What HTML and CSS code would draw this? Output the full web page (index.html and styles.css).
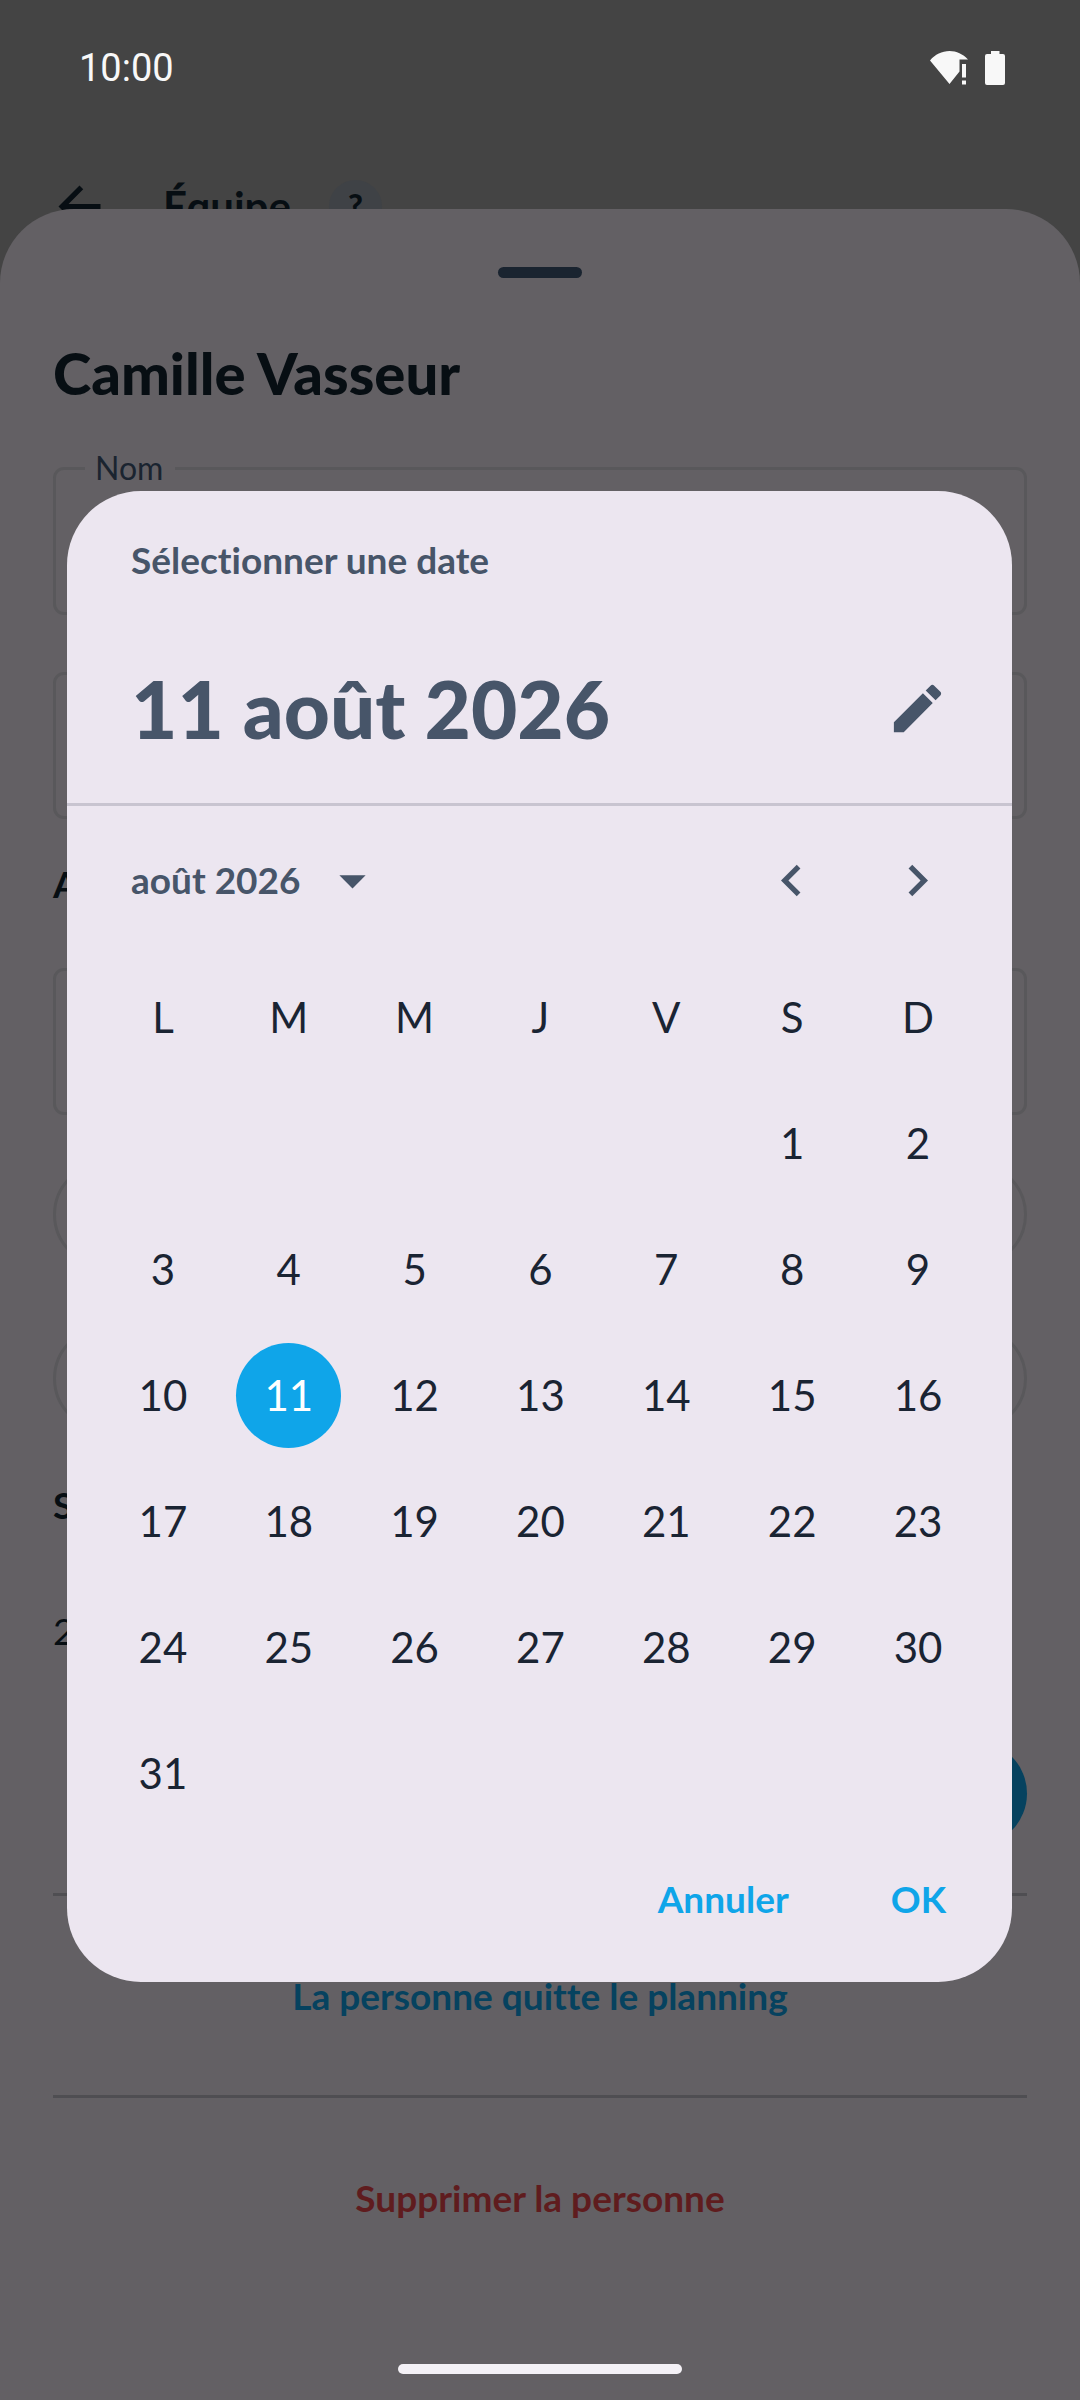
FILE: index.html
```html
<!DOCTYPE html>
<html lang="fr">

<head>
    <meta charset="UTF-8">
    <meta name="viewport" content="width=device-width, initial-scale=1.0">
    <title>Équipe</title>
    <link rel="stylesheet" href="styles.css">
</head>

<body>
    <div class="screen">
        <div class="status-bar">
            <span class="clock">10:00</span>
            <div class="status-icons">
                <svg width="38" height="34" viewBox="0 0 38 34" fill="#f8f8f8">
                    <path d="M0 9.500C5 3.500 12 0 19.500 0C26.500 0 33 3 38 8.500H29.500V20.500L19.500 33Z" />
                    <path d="M32 13H36V26.500H32ZM32 29.500H36V33.500H32Z" />
                </svg>
                <svg width="20" height="34" viewBox="0 0 20 34" fill="#f8f8f8">
                    <path d="M6 0H14.500V3H18Q20 3 20 5V32Q20 34 18 34H2Q0 34 0 32V5Q0 3 2 3H6Z" />
                </svg>
            </div>
        </div>

        <header class="app-bar">
            <button class="icon-btn" aria-label="Retour">
                <svg width="63" height="63" viewBox="0 0 24 24">
                    <path d="M20 11H7.830l5.590-5.590L12 4l-8 8 8 8 1.410-1.410L7.830 13H20v-2z" />
                </svg>
            </button>
            <h1>Équipe</h1>
            <button class="help">?</button>
        </header>

        <main class="sheet">
            <div class="handle"></div>
            <h2 class="name">Camille Vasseur</h2>

            <fieldset class="field named">
                <legend><label for="nom">Nom</label></legend>
                <input type="text" id="nom">
            </fieldset>
            <div class="field">
                <input type="text" aria-label="Poste">
            </div>

            <h3 class="section first">A</h3>
            <div class="field">
                <input type="text" aria-label="Date">
            </div>
            <button class="pill" aria-label="Début"></button>
            <button class="pill" aria-label="Fin"></button>

            <h3 class="section">S</h3>
            <p class="count">2</p>
            <button class="pill save" aria-label="Enregistrer"></button>

            <hr>
            <button class="text-btn leave">La personne quitte le planning</button>
            <hr>
            <button class="text-btn remove">Supprimer la personne</button>

            <div class="home-bar"></div>
        </main>
    </div>

    <div class="overlay">
        <div class="dialog" role="dialog" aria-labelledby="dialog-title">
            <div class="dialog-head">
                <p class="dialog-title" id="dialog-title">Sélectionner une date</p>
                <div class="headline">
                    <h2>11 août 2026</h2>
                    <button class="icon-btn" aria-label="Modifier">
                        <svg width="63" height="63" viewBox="0 0 24 24">
                            <path d="M3 17.250V21h3.750L17.810 9.940l-3.750-3.750L3 17.250zM20.710 7.040c.39-.39.39-1.020 0-1.410l-2.340-2.340c-.39-.39-1.020-.39-1.410 0l-1.830 1.830 3.750 3.750 1.830-1.830z" />
                        </svg>
                    </button>
                </div>
            </div>

            <div class="month-bar">
                <button class="month">août 2026
                    <svg width="63" height="63" viewBox="0 0 24 24">
                        <path d="M7 10l5 5 5-5z" />
                    </svg>
                </button>
                <div class="arrows">
                    <button class="icon-btn" aria-label="Mois précédent">
                        <svg width="63" height="63" viewBox="0 0 24 24">
                            <path d="M15.410 16.590L10.830 12l4.580-4.590L14 6l-6 6 6 6 1.410-1.410z" />
                        </svg>
                    </button>
                    <button class="icon-btn" aria-label="Mois suivant">
                        <svg width="63" height="63" viewBox="0 0 24 24">
                            <path d="M8.590 16.590L13.170 12 8.590 7.410 10 6l6 6-6 6-1.410-1.410z" />
                        </svg>
                    </button>
                </div>
            </div>

            <table class="calendar">
                <thead>
                    <tr>
                        <th>L</th>
                        <th>M</th>
                        <th>M</th>
                        <th>J</th>
                        <th>V</th>
                        <th>S</th>
                        <th>D</th>
                    </tr>
                </thead>
                <tbody>
                    <tr>
                        <td></td>
                        <td></td>
                        <td></td>
                        <td></td>
                        <td></td>
                        <td><button>1</button></td>
                        <td><button>2</button></td>
                    </tr>
                    <tr>
                        <td><button>3</button></td>
                        <td><button>4</button></td>
                        <td><button>5</button></td>
                        <td><button>6</button></td>
                        <td><button>7</button></td>
                        <td><button>8</button></td>
                        <td><button>9</button></td>
                    </tr>
                    <tr>
                        <td><button>10</button></td>
                        <td><button class="selected">11</button></td>
                        <td><button>12</button></td>
                        <td><button>13</button></td>
                        <td><button>14</button></td>
                        <td><button>15</button></td>
                        <td><button>16</button></td>
                    </tr>
                    <tr>
                        <td><button>17</button></td>
                        <td><button>18</button></td>
                        <td><button>19</button></td>
                        <td><button>20</button></td>
                        <td><button>21</button></td>
                        <td><button>22</button></td>
                        <td><button>23</button></td>
                    </tr>
                    <tr>
                        <td><button>24</button></td>
                        <td><button>25</button></td>
                        <td><button>26</button></td>
                        <td><button>27</button></td>
                        <td><button>28</button></td>
                        <td><button>29</button></td>
                        <td><button>30</button></td>
                    </tr>
                    <tr>
                        <td><button>31</button></td>
                        <td></td>
                        <td></td>
                        <td></td>
                        <td></td>
                        <td></td>
                        <td></td>
                    </tr>
                </tbody>
            </table>

            <div class="actions">
                <button>Annuler</button>
                <button>OK</button>
            </div>
        </div>
    </div>
</body>

</html>
```

FILE: styles.css
```css
* {
    box-sizing: border-box;
}

body {
    margin: 0;
    font-family: Lato, "Open Sans", sans-serif;
    font-size: 37px;
    line-height: 48px;
    font-variant-ligatures: none;
    color: #070e13;
    background-color: #444444;
}

h1,
h2,
h3,
p {
    margin: 0;
}

button {
    padding: 0;
    border: none;
    background: none;
    font: inherit;
    font-variant-ligatures: none;
    color: inherit;
    cursor: pointer;
}

svg {
    display: block;
}

.screen {
    display: flex;
    flex-direction: column;
    min-height: 100vh;
}

/* status bar and app bar */
.status-bar {
    display: flex;
    justify-content: space-between;
    align-items: center;
    height: 136px;
    padding: 0 75px 0 79px;
}

.clock {
    font-family: Roboto, sans-serif;
    font-size: 38px;
    color: #f8f8f8;
}

.status-icons {
    display: flex;
    gap: 17px;
}

.app-bar {
    display: flex;
    align-items: center;
    height: 140px;
    padding-left: 48px;
}

.app-bar .icon-btn {
    width: 63px;
    fill: #070e13;
}

.app-bar h1 {
    margin-left: 52px;
    font-size: 42px;
    font-weight: bold;
}

.help {
    width: 53px;
    height: 53px;
    margin-left: 38px;
    border-radius: 50%;
    background-color: #3f4246;
    font-size: 32px;
    font-weight: 900;
}

/* bottom sheet, slides over the app bar */
.sheet {
    position: relative;
    display: flex;
    flex-direction: column;
    flex: 1;
    margin-top: -67px;
    padding: 58px 53px 26px;
    border-radius: 74px 74px 0 0;
    background-color: #636064;
}

.handle {
    width: 84px;
    height: 11px;
    margin: 0 auto;
    border-radius: 6px;
    background-color: #1a2430;
}

.name {
    margin: 57px 0 37px;
    font-size: 58px;
    font-weight: 900;
    line-height: 76px;
}

.field {
    height: 147px;
    margin: 0;
    padding: 0 40px;
    border: 3px solid #59585b;
    border-radius: 11px;
}

.field.named {
    height: 167px;
    margin-bottom: 57px;
    padding: 0 29px;
}

.field legend {
    padding: 0 12px 0 10px;
    font-size: 32px;
    line-height: 40px;
    color: #1a2430;
}

.field input {
    width: 100%;
    height: 100%;
    padding: 0;
    border: none;
    outline: none;
    background: none;
    font: inherit;
}

.section {
    margin: 50px 0 78px;
    font-size: 37px;
}

.section.first {
    margin: 41px 0 60px;
}

.pill {
    flex: none;
    height: 105px;
    margin-top: 59px;
    border: 3px solid #59585b;
    border-radius: 53px;
}

.field + .pill {
    margin-top: 47px;
}

.pill.save {
    align-self: flex-end;
    width: 300px;
    margin-top: 86px;
    border: none;
    background-color: #06425f;
}

hr {
    width: 100%;
    margin: 47px 0;
    border: none;
    border-top: 3px solid #4f4e52;
}

.text-btn {
    height: 105px;
    font-weight: bold;
}

.leave {
    color: #06425f;
}

.remove {
    color: #5f1c1e;
}

.home-bar {
    width: 284px;
    height: 10px;
    margin: auto auto 0;
    border-radius: 5px;
    background-color: #f4f1f6;
}

/* date picker dialog */
.overlay {
    position: absolute;
    inset: 0;
    display: flex;
    align-items: center;
    padding: 73px 68px 0 67px;
}

.dialog {
    width: 100%;
    padding-bottom: 20px;
    border-radius: 74px;
    background-color: #ece6f0;
    color: #475569;
    overflow: hidden;
}

.dialog svg {
    fill: #475569;
}

.dialog-head {
    padding: 45px 32px 32px 64px;
    border-bottom: 3px solid #c8c4d0;
}

.dialog-title {
    font-weight: bold;
}

.headline {
    display: flex;
    justify-content: space-between;
    align-items: center;
    margin-top: 61px;
}

.headline h2 {
    font-size: 80px;
    font-weight: 900;
    line-height: 126px;
}

.dialog .icon-btn {
    display: flex;
    justify-content: center;
    align-items: center;
    width: 126px;
    height: 126px;
}

.month-bar {
    display: flex;
    justify-content: space-between;
    align-items: center;
    height: 148px;
    padding: 0 32px 0 64px;
}

.month {
    display: flex;
    align-items: center;
    gap: 20px;
    font-weight: bold;
}

.arrows {
    display: flex;
}

.calendar {
    width: calc(100% - 64px);
    margin: 0 31px 0 33px;
    border-collapse: collapse;
    table-layout: fixed;
    font-size: 42px;
    color: #1a2433;
}

.calendar th,
.calendar td {
    height: 126px;
    padding: 0;
    font-weight: normal;
    text-align: center;
}

.calendar button {
    display: block;
    width: 105px;
    height: 105px;
    margin: 0 auto;
    border-radius: 50%;
}

.calendar .selected {
    background-color: #0fa5e9;
    color: #ffffff;
}

.actions {
    display: flex;
    justify-content: flex-end;
    align-items: center;
    gap: 102px;
    height: 126px;
    padding-right: 66px;
}

.actions button {
    font-weight: bold;
    color: #0fa5e9;
}
```
